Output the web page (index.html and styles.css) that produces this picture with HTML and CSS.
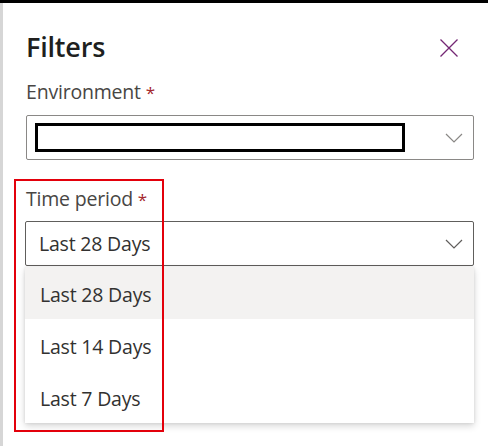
FILE: index.html
```html
<!DOCTYPE html>
<html>
<head>
<meta charset="utf-8">
<link rel="stylesheet" href="styles.css">
</head>
<body>
<div class="topbar"></div>
<div class="panel">
  <div class="header">
    <h1 class="title">Filters</h1>
    <button class="close" aria-label="Close">
      <svg width="20" height="20" viewBox="0 0 20 20"><path d="M1.5 1.5 L18.5 18.5 M18.5 1.5 L1.5 18.5" stroke="#742774" stroke-width="1.3" fill="none"/></svg>
    </button>
  </div>
  <div class="field">
    <div class="label">Environment <span class="req">*</span></div>
    <div class="select env">
      <div class="redact"></div>
      <svg class="chev" width="18" height="10" viewBox="0 0 18 10"><path d="M1 1 L9 9 L17 1" stroke="#8a8886" stroke-width="1.2" fill="none"/></svg>
    </div>
  </div>
  <div class="field time">
    <div class="label">Time period <span class="req">*</span></div>
    <div class="select open">
      <span class="value">Last 28 Days</span>
      <svg class="chev" width="18" height="10" viewBox="0 0 18 10"><path d="M1 1 L9 9 L17 1" stroke="#605e5c" stroke-width="1.2" fill="none"/></svg>
    </div>
    <ul class="menu">
      <li class="item selected">Last 28 Days</li>
      <li class="item">Last 14 Days</li>
      <li class="item">Last 7 Days</li>
    </ul>
    <div class="highlight"></div>
  </div>
</div>
</body>
</html>
```
FILE: styles.css
```css
html, body {
  margin: 0;
  padding: 0;
  background: #fff;
  font-family: "Open Sans", "Noto Sans", sans-serif;
  color: #323130;
}
.topbar {
  height: 3px;
  background: #000;
}
.panel {
  border-left: 3px solid #d6d6d6;
  height: 443px;
  box-sizing: border-box;
  padding: 0 14px 0 23px;
}
.header {
  display: flex;
  justify-content: space-between;
  align-items: center;
  padding-top: 24px;
  height: 40px;
}
.title {
  margin: 0;
  font-size: 27px;
  line-height: 40px;
  font-weight: 600;
  color: #201f1e;
  letter-spacing: -0.2px;
}
.close {
  border: 0;
  background: none;
  padding: 0;
  margin-right: 15px;
  margin-top: 2px;
  width: 20px;
  height: 20px;
  display: flex;
}
.field {
  margin-top: 11px;
}
.label {
  font-size: 19.5px;
  color: #484644;
  height: 28px;
  line-height: 28px;
  letter-spacing: -0.2px;
}
.req {
  color: #a4262c;
  font-size: 17px;
}
.select {
  margin-top: 9px;
  height: 45px;
  box-sizing: border-box;
  border: 1px solid #8a8886;
  border-radius: 2px;
  display: flex;
  align-items: center;
  justify-content: space-between;
  padding: 0 10px 0 8px;
}
.redact {
  width: 364px;
  height: 23px;
  border: 3px solid #000;
}
.chev {
  flex: none;
}
.time {
  margin-top: 25px;
  position: relative;
}
.select.open {
  margin-top: 8px;
  border-color: #605e5c;
  margin-left: -1px;
  padding-left: 13px;
}
.value {
  font-size: 19.5px;
  color: #323130;
  letter-spacing: -0.2px;
}
.menu {
  list-style: none;
  margin: 1px 0 0 -1px;
  padding: 0;
  background: #fff;
  box-shadow: 0 3px 7px rgba(0,0,0,0.16), 0 0 3px rgba(0,0,0,0.1);
}
.item {
  height: 52px;
  box-sizing: border-box;
  line-height: 52px;
  padding: 2px 0 0 15px;
  font-size: 19.5px;
  color: #323130;
  letter-spacing: -0.2px;
}
.item.selected {
  background: #f3f2f1;
}
.highlight {
  position: absolute;
  left: -12px;
  top: -6px;
  width: 146px;
  height: 249px;
  border: 2px solid #e3000b;
  pointer-events: none;
}
```
